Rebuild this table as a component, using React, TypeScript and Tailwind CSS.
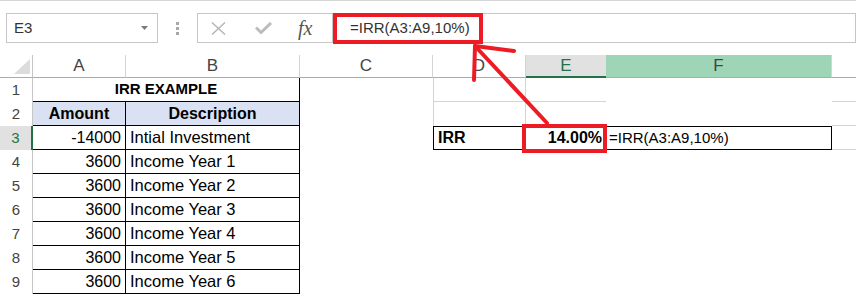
import React from "react";

type Entry = {
  amount: string;
  label: string;
};

const entries: Entry[] = [
  { amount: "-14000", label: "Intial Investment" },
  { amount: "3600", label: "Income Year 1" },
  { amount: "3600", label: "Income Year 2" },
  { amount: "3600", label: "Income Year 3" },
  { amount: "3600", label: "Income Year 4" },
  { amount: "3600", label: "Income Year 5" },
  { amount: "3600", label: "Income Year 6" },
];

const FormulaBar = () => (
  <div className="flex h-[30px]">
    <div className="ml-[6px] flex w-[152px] items-center justify-between border border-[#c6c6c6] pl-[7px] pr-[9px] text-[15px] text-[#333]">
      <span>E3</span>
      <svg width="7" height="4" viewBox="0 0 7 4">
        <path d="M0 0h7L3.5 4z" fill="#7a7a7a" />
      </svg>
    </div>
    <div className="flex w-[39px] flex-col items-center justify-center gap-[2px]">
      <span className="block h-[3px] w-[3px] bg-[#a8a8a8]" />
      <span className="block h-[3px] w-[3px] bg-[#a8a8a8]" />
      <span className="block h-[3px] w-[3px] bg-[#a8a8a8]" />
    </div>
    <div className="flex w-[136px] items-center border border-[#c6c6c6]">
      {/* cancel */}
      <svg className="ml-[13px]" width="15" height="13" viewBox="0 0 15 13">
        <path d="M1 0.5L14 12.5M14 0.5L1 12.5" stroke="#b3b3b3" strokeWidth="1.4" fill="none" />
      </svg>
      {/* enter */}
      <svg className="ml-[29px]" width="17" height="12" viewBox="0 0 17 12">
        <path d="M1 5.5L6 10.5L16 1" stroke="#bcbcbc" strokeWidth="3" fill="none" />
      </svg>
      <span className="ml-[26px] font-['Liberation_Serif',serif] text-[20px] italic leading-none text-[#555]">
        fx
      </span>
    </div>
    <div className="flex flex-1 items-center border-y border-r border-[#c6c6c6] pl-[17px] text-[15px] text-[#333]">
      =IRR(A3:A9,10%)
    </div>
  </div>
);

const Sheet = () => (
  <div className="grid grid-cols-[33px_93px_174px_133px_93px_80px_226px_1fr] grid-rows-[23px_repeat(9,24px)] text-[16px]">
    {/* column headings */}
    <div className="flex items-end justify-end border-b border-r border-b-[#ababab] border-r-[#c6c6c6] pb-[3px] pr-[2px]">
      <svg width="16" height="15" viewBox="0 0 16 15">
        <polygon points="16,0 16,15 0,15" fill="#dcdcdc" />
      </svg>
    </div>
    {["A", "B", "C", "D"].map((c) => (
      <div
        key={c}
        className="flex items-center justify-center border-b border-r border-b-[#ababab] border-r-[#d4d4d4] text-[17px] text-[#444]"
      >
        {c}
      </div>
    ))}
    <div className="flex items-center justify-center border-b-2 border-[#217346] bg-[#e1e1e1] text-[17px] text-[#217346]">
      E
    </div>
    <div className="flex items-center justify-center border-b border-r border-b-[#ababab] border-r-[#d4d4d4] bg-[#9fd5b7] text-[17px] text-[#444]">
      F
    </div>
    <div className="border-b border-[#ababab]" />

    {/* row 1 */}
    <div className="flex items-center justify-center border-r border-[#c6c6c6] text-[15px] text-[#444]">1</div>
    <div className="col-span-2 flex items-center justify-center border-b border-r border-black text-[15px] font-bold">
      IRR EXAMPLE
    </div>
    <div />
    <div className="border-x border-b border-[#d4d4d4]" />
    <div className="border-b border-[#d4d4d4]" />
    <div />
    <div className="border-b border-[#d4d4d4]" />

    {/* row 2 */}
    <div className="flex items-center justify-center border-r border-[#c6c6c6] text-[15px] text-[#444]">2</div>
    <div className="flex items-center justify-center border-b border-r border-black bg-[#d9e1f2] font-bold">
      Amount
    </div>
    <div className="flex items-center justify-center border-b border-r border-black bg-[#d9e1f2] font-bold">
      Description
    </div>
    <div />
    <div className="border-x border-[#d4d4d4]" />
    <div />
    <div />
    <div className="border-b border-[#d4d4d4]" />

    {/* rows 3-9 */}
    {entries.map((e, i) => {
      const row = i + 3;
      const active = row === 3;
      return (
        <React.Fragment key={row}>
          <div
            className={
              active
                ? "flex items-center justify-center border-r-2 border-[#217346] bg-[#e1e1e1] text-[15px] text-[#217346]"
                : "flex items-center justify-center border-r border-[#c6c6c6] text-[15px] text-[#444]"
            }
          >
            {row}
          </div>
          <div className="flex items-center justify-end border-b border-r border-black pr-[4px]">{e.amount}</div>
          <div className="flex items-center border-b border-r border-black pl-[4px] text-[16.5px]">{e.label}</div>
          <div />
          {active ? (
            <>
              <div className="col-span-3 flex border border-black">
                <div className="flex w-[92px] items-center pl-[4px] font-bold">IRR</div>
                <div className="flex w-[80px] items-center justify-end pr-[4px] font-bold">14.00%</div>
                <div className="flex flex-1 items-center pl-[3px] text-[15px]">=IRR(A3:A9,10%)</div>
              </div>
              <div className="border-b border-[#d4d4d4]" />
            </>
          ) : (
            <>
              <div />
              <div />
              <div />
              <div />
            </>
          )}
        </React.Fragment>
      );
    })}
  </div>
);

// red markup drawn on top of the sheet
const Callout = () => (
  <svg
    className="pointer-events-none absolute left-0 top-0"
    width="856"
    height="297"
    viewBox="0 0 856 297"
  >
    <g stroke="#ed1c24" strokeWidth="4" fill="none" strokeLinecap="round" strokeLinejoin="round">
      <rect x="335" y="15" width="146" height="27" strokeLinecap="butt" strokeLinejoin="miter" />
      <rect x="524" y="126" width="81" height="25" strokeLinecap="butt" strokeLinejoin="miter" />
      <path d="M475 46L547 123" />
      <path d="M475 46L514 51" />
      <path d="M475 46L474 80" />
    </g>
  </svg>
);

export default function App() {
  return (
    <div className="relative h-[297px] w-[856px] overflow-hidden bg-white font-['Liberation_Sans',Arial,sans-serif] text-black">
      <div className="h-[13px] border-t border-[#d6d6d6]" />
      <FormulaBar />
      <div className="h-[12px]" />
      <Sheet />
      <Callout />
    </div>
  );
}
